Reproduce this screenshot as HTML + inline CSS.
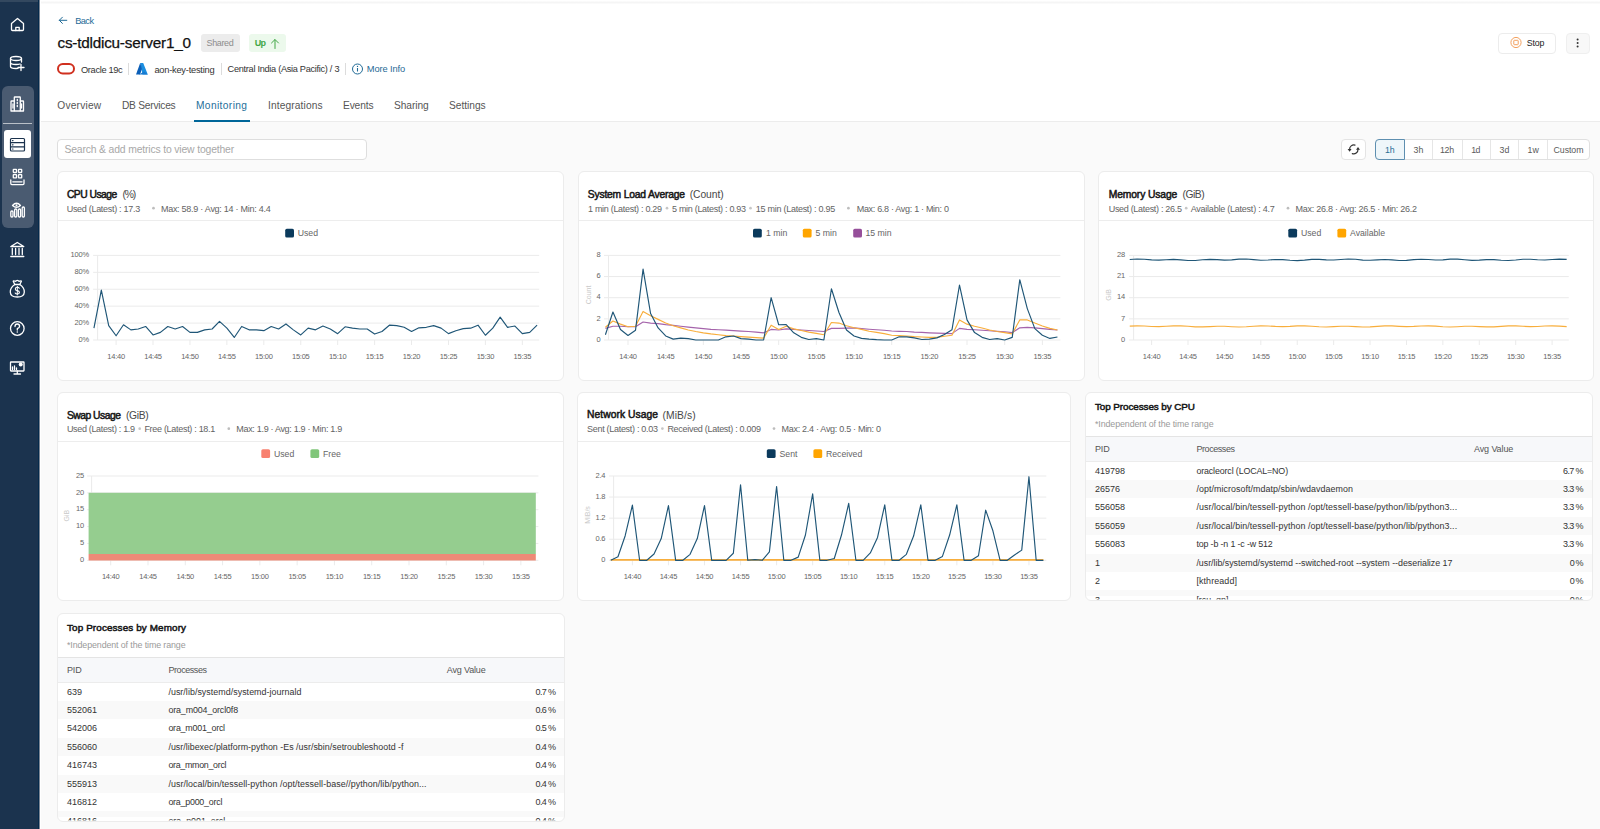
<!DOCTYPE html>
<html><head><meta charset="utf-8"><style>
*{box-sizing:border-box;margin:0;padding:0}
html,body{width:1600px;height:829px;overflow:hidden}
body{background:#fafafa;font-family:"Liberation Sans", sans-serif;position:relative}
.a{position:absolute}
.t{position:absolute;line-height:20px;white-space:nowrap}
</style></head><body>
<div class="a" style="left:0px;top:0px;width:39px;height:829px;background:#1b334e"></div><div class="a" style="left:0px;top:0px;width:39px;height:2px;background:#33485f"></div><div class="a" style="left:38px;top:0px;width:1px;height:829px;background:#042a4c"></div><div class="a" style="left:39px;top:0px;width:1px;height:829px;background:#7b8593"></div><div class="a" style="left:40px;top:0px;width:1px;height:829px;background:#fff"></div><div class="a" style="left:2px;top:86px;width:32px;height:142px;background:#4a5b71;border-radius:6px"></div><div class="a" style="left:3px;top:123px;width:29px;height:1px;background:#b9c0c8"></div><div class="a" style="left:4px;top:130px;width:27px;height:28px;background:#ffffff;border-radius:3px"></div><svg class="a" style="left:0;top:0" width="40" height="400"><path d="M11.5 23.5 L17.5 18.5 L23.5 23.5 L23.5 29.5 Q23.5 30.5 22.5 30.5 L12.5 30.5 Q11.5 30.5 11.5 29.5 Z" stroke="#fff" stroke-width="1.3" fill="none" stroke-linecap="round" stroke-linejoin="round"/><path d="M15.8 30.5 V27.3 H19.2 V30.5" stroke="#fff" stroke-width="1.3" fill="none" stroke-linecap="round" stroke-linejoin="round"/><ellipse cx="16" cy="58.5" rx="5.5" ry="2" stroke="#fff" stroke-width="1.3" fill="none" stroke-linecap="round" stroke-linejoin="round"/><path d="M10.5 58.5 V66.5 Q10.5 68.5 16 68.5 Q17 68.5 18 68.4 M21.5 58.5 V62 M10.5 62.5 Q10.5 64.5 16 64.5 Q18.5 64.5 20 64" stroke="#fff" stroke-width="1.3" fill="none" stroke-linecap="round" stroke-linejoin="round"/><path d="M21 64.5 V70.5 M18 67.5 H24" stroke="#fff" stroke-width="1.3" fill="none" stroke-linecap="round" stroke-linejoin="round"/><rect x="14.3" y="97" width="6" height="14" rx="0.5" stroke="#fff" stroke-width="1.3" fill="none" stroke-linecap="round" stroke-linejoin="round"/><path d="M14.3 101 H11.5 Q11 101 11 101.5 V111 H14.3 M20.3 101 H23 Q23.5 101 23.5 101.5 V111 H20.3" stroke="#fff" stroke-width="1.3" fill="none" stroke-linecap="round" stroke-linejoin="round"/><path d="M17.3 99.5 V100.5 M17.3 102.5 V103.5 M17.3 105.5 V106.5" stroke="#fff" stroke-width="1.3" fill="none" stroke-linecap="round" stroke-linejoin="round"/><path d="M13 104 V108 M21.5 104 V108" stroke="#fff" stroke-width="1.3" fill="none" stroke-linecap="round" stroke-linejoin="round"/><rect x="10.5" y="138.5" width="14" height="12.5" rx="1" stroke="#1b324d" stroke-width="1.2" fill="none" stroke-linecap="round" stroke-linejoin="round"/><path d="M10.5 142.7 H24.5 M10.5 146.9 H24.5" stroke="#1b324d" stroke-width="1.2" fill="none" stroke-linecap="round" stroke-linejoin="round"/><path d="M12.5 140.6 H13 M12.5 144.8 H13 M12.5 149 H13" stroke="#1b324d" stroke-width="1.2" fill="none" stroke-linecap="round" stroke-linejoin="round"/><rect x="13.3" y="169.3" width="3.2" height="3.2" rx="0.4" stroke="#fff" stroke-width="1.3" fill="none" stroke-linecap="round" stroke-linejoin="round"/><rect x="18.5" y="169.3" width="3.2" height="3.2" rx="0.4" stroke="#fff" stroke-width="1.3" fill="none" stroke-linecap="round" stroke-linejoin="round"/><rect x="13.3" y="174.6" width="3.2" height="3.2" rx="0.4" stroke="#fff" stroke-width="1.3" fill="none" stroke-linecap="round" stroke-linejoin="round"/><rect x="18.5" y="174.6" width="3.2" height="3.2" rx="0.4" stroke="#fff" stroke-width="1.3" fill="none" stroke-linecap="round" stroke-linejoin="round"/><path d="M10.8 180 V183.6 Q10.8 184.6 11.8 184.6 H23 Q24 184.6 24 183.6 V180 M12.8 181.8 H22" stroke="#fff" stroke-width="1.3" fill="none" stroke-linecap="round" stroke-linejoin="round"/><path d="M12.5 205.5 Q16.5 201 20.5 205.5 Q16.5 209 12.5 205.5 Z" stroke="#fff" stroke-width="1.3" fill="none" stroke-linecap="round" stroke-linejoin="round"/><circle cx="16.5" cy="205.3" r="1" fill="#fff"/><rect x="10.8" y="211" width="2.2" height="6" rx="1" stroke="#fff" stroke-width="1.3" fill="none" stroke-linecap="round" stroke-linejoin="round"/><rect x="14.6" y="209" width="2.2" height="8" rx="1" stroke="#fff" stroke-width="1.3" fill="none" stroke-linecap="round" stroke-linejoin="round"/><rect x="18.4" y="209" width="2.2" height="8" rx="1" stroke="#fff" stroke-width="1.3" fill="none" stroke-linecap="round" stroke-linejoin="round"/><rect x="22.2" y="207" width="2.2" height="10" rx="1" stroke="#fff" stroke-width="1.3" fill="none" stroke-linecap="round" stroke-linejoin="round"/><path d="M10.8 246.5 L17.3 242.5 L23.8 246.5 Z" stroke="#fff" stroke-width="1.3" fill="none" stroke-linecap="round" stroke-linejoin="round"/><path d="M12.3 248.5 V254.5 M15.6 248.5 V254.5 M19 248.5 V254.5 M22.3 248.5 V254.5 M10.8 256.5 H23.8" stroke="#fff" stroke-width="1.3" fill="none" stroke-linecap="round" stroke-linejoin="round"/><path d="M14.8 284.5 L13.2 281.3 Q13.5 280.5 14.5 281 Q15.5 281.6 16.3 280.8 Q17.3 280 18.3 280.8 Q19.1 281.6 20.1 281 Q21.1 280.5 21.4 281.3 L19.8 284.5 Q24.5 287.5 24.3 292.2 Q24 297 17.3 297 Q10.6 297 10.3 292.2 Q10.1 287.5 14.8 284.5 Z" stroke="#fff" stroke-width="1.3" fill="none" stroke-linecap="round" stroke-linejoin="round"/><path d="M14.8 284.5 H19.8" stroke="#fff" stroke-width="1.3" fill="none" stroke-linecap="round" stroke-linejoin="round"/><path d="M19.3 288.3 Q18.8 287.3 17.3 287.3 Q15.3 287.3 15.3 288.9 Q15.3 290.3 17.3 290.6 Q19.4 291 19.4 292.5 Q19.4 294 17.3 294 Q15.7 294 15.2 293" stroke="#fff" stroke-width="1.1" fill="none" stroke-linecap="round"/><path d="M17.3 286 V295.3" stroke="#fff" stroke-width="1" fill="none"/><circle cx="17.3" cy="328.5" r="6.8" stroke="#fff" stroke-width="1.3" fill="none" stroke-linecap="round" stroke-linejoin="round"/><path d="M15 326.5 Q15 324 17.3 324 Q19.6 324 19.6 326.3 Q19.6 327.8 17.3 328.7 V330" stroke="#fff" stroke-width="1.3" fill="none" stroke-linecap="round" stroke-linejoin="round"/><circle cx="17.3" cy="332" r="0.8" fill="#fff"/><rect x="10.5" y="362" width="13.5" height="9" rx="0.5" stroke="#fff" stroke-width="1.3" fill="none" stroke-linecap="round" stroke-linejoin="round"/><path d="M17.3 371 V374 M14 374 H20.5" stroke="#fff" stroke-width="1.3" fill="none" stroke-linecap="round" stroke-linejoin="round"/><path d="M12.5 369.5 V367 M14.5 369.5 V366 M16.5 369.5 V368" stroke="#fff" stroke-width="1.3" fill="none" stroke-linecap="round" stroke-linejoin="round"/><circle cx="20.7" cy="364.5" r="2" fill="#fff"/></svg><div class="a" style="left:40px;top:0px;width:1560px;height:121px;background:#fff"></div><div class="a" style="left:41px;top:1px;width:1559px;height:3px;background:linear-gradient(#fdfdfd,#f5f5f5,#fdfdfd)"></div><div class="a" style="left:41px;top:121px;width:1559px;height:1px;background:#ececec"></div><div class="a" style="left:201px;top:34px;width:39px;height:18px;background:#ececec;border-radius:3px"></div><div class="a" style="left:249px;top:34px;width:37px;height:18px;background:#ecf9ec;border-radius:3px"></div><div class="a" style="left:128px;top:63px;width:1px;height:12px;background:#dcdcdc"></div><div class="a" style="left:221px;top:63px;width:1px;height:12px;background:#dcdcdc"></div><div class="a" style="left:345px;top:63px;width:1px;height:12px;background:#dcdcdc"></div><div class="a" style="left:1498px;top:32.5px;width:58px;height:21.0px;background:#fff;border:1px solid #ececec;border-radius:4px"></div><div class="a" style="left:1565.5px;top:32.5px;width:24.0px;height:21.0px;background:#f8f8f8;border:1px solid #efefef;border-radius:4px"></div><div class="a" style="left:194px;top:119.5px;width:56px;height:2.0px;background:#006699"></div><div class="a" style="left:57px;top:139px;width:310px;height:21px;background:#fff;border:1px solid #dedede;border-radius:4px"></div><div class="a" style="left:1341px;top:139px;width:25px;height:21px;background:#fff;border:1px solid #e4e4e4;border-radius:4px"></div><div class="a" style="left:1375px;top:139px;width:215px;height:21px;background:#fff;border:1px solid #e0e0e0;border-radius:4px"></div><div class="a" style="left:1404px;top:140px;width:1px;height:19px;background:#e6e6e6"></div><div class="a" style="left:1432px;top:140px;width:1px;height:19px;background:#e6e6e6"></div><div class="a" style="left:1462px;top:140px;width:1px;height:19px;background:#e6e6e6"></div><div class="a" style="left:1490px;top:140px;width:1px;height:19px;background:#e6e6e6"></div><div class="a" style="left:1518px;top:140px;width:1px;height:19px;background:#e6e6e6"></div><div class="a" style="left:1547px;top:140px;width:1px;height:19px;background:#e6e6e6"></div><div class="a" style="left:1375px;top:139px;width:30px;height:21px;background:#eef6fa;border:1px solid #5e8fb0;border-radius:4px 0 0 4px"></div><div class="a" style="left:57px;top:171px;width:507px;height:210px;background:#fff;border:1px solid #ececec;border-radius:6px"></div><div class="a" style="left:58px;top:220px;width:505px;height:1px;background:#ededed"></div><div class="a" style="left:578px;top:171px;width:507px;height:210px;background:#fff;border:1px solid #ececec;border-radius:6px"></div><div class="a" style="left:579px;top:220px;width:505px;height:1px;background:#ededed"></div><div class="a" style="left:1098px;top:171px;width:496px;height:210px;background:#fff;border:1px solid #ececec;border-radius:6px"></div><div class="a" style="left:1099px;top:220px;width:494px;height:1px;background:#ededed"></div><div class="a" style="left:57px;top:392px;width:507px;height:209px;background:#fff;border:1px solid #ececec;border-radius:6px"></div><div class="a" style="left:58px;top:441px;width:505px;height:1px;background:#ededed"></div><div class="a" style="left:577px;top:392px;width:494px;height:209px;background:#fff;border:1px solid #ececec;border-radius:6px"></div><div class="a" style="left:578px;top:441px;width:492px;height:1px;background:#ededed"></div><div class="a" style="left:1085px;top:392px;width:508px;height:209px;background:#fff;border:1px solid #ececec;border-radius:6px"></div><div class="a" style="left:1086px;top:436px;width:506px;height:26.19999999999999px;background:#f7f8fa;border-top:1px solid #e4e4e4;border-bottom:1px solid #ececec"></div><div class="a" style="left:1086px;top:479.83px;width:506px;height:18.430000000000007px;background:#f9f9f9"></div><div class="a" style="left:1086px;top:516.6899999999999px;width:506px;height:18.42999999999995px;background:#f9f9f9"></div><div class="a" style="left:1086px;top:553.55px;width:506px;height:18.42999999999995px;background:#f9f9f9"></div><div class="a" style="left:1086px;top:590.41px;width:506px;height:5.590000000000032px;background:#f9f9f9"></div><div class="a" style="left:57px;top:613px;width:508px;height:209px;background:#fff;border:1px solid #ececec;border-radius:6px"></div><div class="a" style="left:58px;top:657px;width:506px;height:26.200000000000045px;background:#f7f8fa;border-top:1px solid #e4e4e4;border-bottom:1px solid #ececec"></div><div class="a" style="left:58px;top:700.8299999999999px;width:506px;height:18.42999999999995px;background:#f9f9f9"></div><div class="a" style="left:58px;top:737.6899999999999px;width:506px;height:18.42999999999995px;background:#f9f9f9"></div><div class="a" style="left:58px;top:774.55px;width:506px;height:18.42999999999995px;background:#f9f9f9"></div><div class="a" style="left:58px;top:811.41px;width:506px;height:5.590000000000032px;background:#f9f9f9"></div><svg class="a" style="left:0;top:0;font-family:'Liberation Sans', sans-serif" width="1600" height="829"><path d="M66.8 20.3 H59.3 M62.4 17.2 L59.3 20.3 L62.4 23.4" stroke="#1f6a96" stroke-width="1.0" fill="none" stroke-linecap="round" stroke-linejoin="round"/><text x="75.20" y="23.75" font-size="9.2" fill="#1f6a96" textLength="18.80" lengthAdjust="spacing">Back</text><text x="57.50" y="48.10" font-size="15.3" fill="#111" textLength="133.50" lengthAdjust="spacing" stroke="#111" stroke-width="0.25">cs-tdldicu-server1_0</text><text x="206.50" y="46.30" font-size="9.0" fill="#8c8c8c" textLength="27.30" lengthAdjust="spacing">Shared</text><text x="254.70" y="46.30" font-size="9.0" fill="#43a747" font-weight="700" textLength="11.20" lengthAdjust="spacing">Up</text><path d="M275 48.5 V39.8 M271.5 43 L275 39.5 L278.5 43" stroke="#43a747" stroke-width="1.0" fill="none" stroke-linecap="round" stroke-linejoin="round"/><rect x="58" y="64" width="16" height="9.5" rx="4.75" stroke="#d0301f" stroke-width="2" fill="none"/><text x="81.00" y="72.50" font-size="9.3" fill="#333" textLength="41.75" lengthAdjust="spacing">Oracle 19c</text><path d="M140.2 63 L143.2 63 L147.8 74.5 L142.5 74.5 Z" fill="#1b8ee0"/><path d="M140.2 63 L136 74.5 L140 74.5 L142 69 Z" fill="#0b5fb8"/><path d="M139 74.5 L144 71.5 L147.8 74.5 Z" fill="#1779d0"/><text x="154.40" y="72.50" font-size="9.3" fill="#333" textLength="60.20" lengthAdjust="spacing">aon-key-testing</text><text x="227.60" y="72.40" font-size="9.2" fill="#333" textLength="111.90" lengthAdjust="spacing">Central India (Asia Pacific) / 3</text><circle cx="357.5" cy="69" r="5" stroke="#1f6a96" stroke-width="1" fill="none"/><path d="M357.5 68 V71.5" stroke="#1f6a96" stroke-width="1.1"/><circle cx="357.5" cy="66.4" r="0.7" fill="#1f6a96"/><text x="366.80" y="72.40" font-size="9.3" fill="#1f6a96" textLength="38.40" lengthAdjust="spacing">More Info</text><circle cx="1516" cy="42.5" r="5.1" stroke="#f3a15f" stroke-width="1" fill="none"/><rect x="1513.8" y="40.3" width="4.4" height="4.4" rx="0.6" stroke="#f3a15f" stroke-width="1" fill="none"/><text x="1526.80" y="46.00" font-size="8.8" fill="#222" textLength="17.50" lengthAdjust="spacing">Stop</text><circle cx="1577.6" cy="39.5" r="1" fill="#333"/><circle cx="1577.6" cy="43" r="1" fill="#333"/><circle cx="1577.6" cy="46.5" r="1" fill="#333"/><text x="57.30" y="109.20" font-size="10.2" fill="#555" textLength="43.90" lengthAdjust="spacing">Overview</text><text x="122.00" y="109.20" font-size="10.2" fill="#555" textLength="53.70" lengthAdjust="spacing">DB Services</text><text x="196.00" y="109.20" font-size="10.2" fill="#1f6f9a" textLength="51.00" lengthAdjust="spacing">Monitoring</text><text x="268.00" y="109.20" font-size="10.2" fill="#555" textLength="54.60" lengthAdjust="spacing">Integrations</text><text x="343.00" y="109.20" font-size="10.2" fill="#555" textLength="30.50" lengthAdjust="spacing">Events</text><text x="394.00" y="109.20" font-size="10.2" fill="#555" textLength="34.70" lengthAdjust="spacing">Sharing</text><text x="449.00" y="109.20" font-size="10.2" fill="#555" textLength="36.70" lengthAdjust="spacing">Settings</text><text x="64.40" y="153.30" font-size="10.4" fill="#a8a8a8" textLength="169.80" lengthAdjust="spacing">Search &amp; add metrics to view together</text><path d="M1355 145.1 A4.3 4.3 0 0 0 1349.6 149.4 M1352.3 153.6 A4.3 4.3 0 0 0 1358 149.4" stroke="#333" stroke-width="1.2" fill="none" stroke-linecap="round"/><path d="M1347.6 149.1 L1351.6 149.1 L1349.6 151.8 Z M1356 149.7 L1360 149.7 L1358 147 Z" fill="#333"/><text x="1385.10" y="153.00" font-size="8.8" fill="#2b6d95" textLength="9.60" lengthAdjust="spacing">1h</text><text x="1413.60" y="153.00" font-size="8.8" fill="#5a5a5a" textLength="9.70" lengthAdjust="spacing">3h</text><text x="1440.00" y="153.00" font-size="8.8" fill="#5a5a5a" textLength="14.10" lengthAdjust="spacing">12h</text><text x="1471.30" y="153.00" font-size="8.8" fill="#5a5a5a" textLength="9.10" lengthAdjust="spacing">1d</text><text x="1499.60" y="153.00" font-size="8.8" fill="#5a5a5a" textLength="9.70" lengthAdjust="spacing">3d</text><text x="1553.60" y="153.00" font-size="8.8" fill="#5a5a5a" textLength="29.90" lengthAdjust="spacing">Custom</text><text x="1527.40" y="153.00" font-size="8.8" fill="#5a5a5a" textLength="11.50" lengthAdjust="spacing">1w</text><text x="66.90" y="197.90" font-size="10.3" fill="#161616" textLength="50.30" lengthAdjust="spacing" stroke="#161616" stroke-width="0.5">CPU Usage</text><text x="122.50" y="198.10" font-size="10.3" fill="#484848" textLength="13.80" lengthAdjust="spacing">(%)</text><text x="66.70" y="211.75" font-size="9.0" fill="#636363" textLength="73.50" lengthAdjust="spacing">Used (Latest) : 17.3</text><circle cx="153.5" cy="208.15" r="1.35" fill="#bdbdbd"/><text x="160.90" y="211.75" font-size="9.0" fill="#636363" textLength="109.90" lengthAdjust="spacing">Max: 58.9 · Avg: 14 · Min: 4.4</text><text x="587.80" y="197.90" font-size="10.3" fill="#161616" textLength="97.20" lengthAdjust="spacing" stroke="#161616" stroke-width="0.5">System Load Average</text><text x="689.70" y="198.10" font-size="10.3" fill="#484848" textLength="34.00" lengthAdjust="spacing">(Count)</text><text x="588.00" y="211.75" font-size="9.0" fill="#636363" textLength="74.00" lengthAdjust="spacing">1 min (Latest) : 0.29</text><circle cx="667" cy="208.15" r="1.35" fill="#c6c6c6"/><text x="672.00" y="211.75" font-size="9.0" fill="#636363" textLength="74.00" lengthAdjust="spacing">5 min (Latest) : 0.93</text><circle cx="750.5" cy="208.15" r="1.35" fill="#c6c6c6"/><text x="755.80" y="211.75" font-size="9.0" fill="#636363" textLength="79.50" lengthAdjust="spacing">15 min (Latest) : 0.95</text><circle cx="848.4" cy="208.15" r="1.35" fill="#bdbdbd"/><text x="856.70" y="211.75" font-size="9.0" fill="#636363" textLength="92.20" lengthAdjust="spacing">Max: 6.8 · Avg: 1 · Min: 0</text><text x="1108.70" y="197.90" font-size="10.3" fill="#161616" textLength="68.60" lengthAdjust="spacing" stroke="#161616" stroke-width="0.5">Memory Usage</text><text x="1182.50" y="198.10" font-size="10.3" fill="#484848" textLength="22.20" lengthAdjust="spacing">(GiB)</text><text x="1108.70" y="211.75" font-size="9.0" fill="#636363" textLength="73.30" lengthAdjust="spacing">Used (Latest) : 26.5</text><circle cx="1186.2" cy="208.15" r="1.35" fill="#c6c6c6"/><text x="1190.70" y="211.75" font-size="9.0" fill="#636363" textLength="84.10" lengthAdjust="spacing">Available (Latest) : 4.7</text><circle cx="1288" cy="208.15" r="1.35" fill="#bdbdbd"/><text x="1295.50" y="211.75" font-size="9.0" fill="#636363" textLength="121.60" lengthAdjust="spacing">Max: 26.8 · Avg: 26.5 · Min: 26.2</text><text x="66.90" y="418.50" font-size="10.3" fill="#161616" textLength="54.00" lengthAdjust="spacing" stroke="#161616" stroke-width="0.5">Swap Usage</text><text x="126.00" y="418.70" font-size="10.3" fill="#484848" textLength="22.70" lengthAdjust="spacing">(GiB)</text><text x="66.90" y="432.30" font-size="9.0" fill="#636363" textLength="68.10" lengthAdjust="spacing">Used (Latest) : 1.9</text><circle cx="139.7" cy="428.7" r="1.35" fill="#c6c6c6"/><text x="144.40" y="432.30" font-size="9.0" fill="#636363" textLength="70.90" lengthAdjust="spacing">Free (Latest) : 18.1</text><circle cx="228.8" cy="428.7" r="1.35" fill="#bdbdbd"/><text x="236.30" y="432.30" font-size="9.0" fill="#636363" textLength="105.90" lengthAdjust="spacing">Max: 1.9 · Avg: 1.9 · Min: 1.9</text><text x="587.00" y="418.40" font-size="10.3" fill="#161616" textLength="71.00" lengthAdjust="spacing" stroke="#161616" stroke-width="0.5">Network Usage</text><text x="662.60" y="418.60" font-size="10.3" fill="#484848" textLength="33.00" lengthAdjust="spacing">(MiB/s)</text><text x="587.00" y="432.20" font-size="9.0" fill="#636363" textLength="71.00" lengthAdjust="spacing">Sent (Latest) : 0.03</text><circle cx="662.4" cy="428.59999999999997" r="1.35" fill="#c6c6c6"/><text x="667.40" y="432.20" font-size="9.0" fill="#636363" textLength="93.60" lengthAdjust="spacing">Received (Latest) : 0.009</text><circle cx="774" cy="428.59999999999997" r="1.35" fill="#bdbdbd"/><text x="781.60" y="432.20" font-size="9.0" fill="#636363" textLength="99.40" lengthAdjust="spacing">Max: 2.4 · Avg: 0.5 · Min: 0</text><text x="1095.00" y="410.30" font-size="9.9" fill="#161616" textLength="100.00" lengthAdjust="spacing" stroke="#161616" stroke-width="0.5">Top Processes by CPU</text><text x="1095.00" y="426.80" font-size="8.9" fill="#9a9a9a" textLength="118.60" lengthAdjust="spacing">*Independent of the time range</text><text x="1095.00" y="451.80" font-size="9.0" fill="#555" textLength="14.70" lengthAdjust="spacing">PID</text><text x="1196.40" y="451.80" font-size="9.0" fill="#555" textLength="38.60" lengthAdjust="spacing">Processes</text><text x="1474.00" y="451.80" font-size="9.0" fill="#555" textLength="39.30" lengthAdjust="spacing">Avg Value</text><clipPath id="clip1085"><rect x="1085" y="392" width="507" height="207.5"/></clipPath><g clip-path="url(#clip1085)"><text x="1095.00" y="473.60" font-size="9.0" fill="#333">419798</text><text x="1196.40" y="473.60" font-size="8.9" fill="#333" textLength="91.70" lengthAdjust="spacing">oracleorcl (LOCAL=NO)</text><text x="1563.12" y="473.60" font-size="9.0" fill="#333" textLength="20.48" lengthAdjust="spacing">6.7 %</text><text x="1095.00" y="492.03" font-size="9.0" fill="#333">26576</text><text x="1196.40" y="492.03" font-size="8.9" fill="#333" textLength="156.50" lengthAdjust="spacing">/opt/microsoft/mdatp/sbin/wdavdaemon</text><text x="1563.12" y="492.03" font-size="9.0" fill="#333" textLength="20.48" lengthAdjust="spacing">3.3 %</text><text x="1095.00" y="510.46" font-size="9.0" fill="#333">556058</text><text x="1196.40" y="510.46" font-size="8.9" fill="#333" textLength="260.70" lengthAdjust="spacing">/usr/local/bin/tessell-python /opt/tessell-base/python/lib/python3...</text><text x="1563.12" y="510.46" font-size="9.0" fill="#333" textLength="20.48" lengthAdjust="spacing">3.3 %</text><text x="1095.00" y="528.89" font-size="9.0" fill="#333">556059</text><text x="1196.40" y="528.89" font-size="8.9" fill="#333" textLength="260.70" lengthAdjust="spacing">/usr/local/bin/tessell-python /opt/tessell-base/python/lib/python3...</text><text x="1563.12" y="528.89" font-size="9.0" fill="#333" textLength="20.48" lengthAdjust="spacing">3.3 %</text><text x="1095.00" y="547.32" font-size="9.0" fill="#333">556083</text><text x="1196.40" y="547.32" font-size="8.9" fill="#333" textLength="76.40" lengthAdjust="spacing">top -b -n 1 -c -w 512</text><text x="1563.12" y="547.32" font-size="9.0" fill="#333" textLength="20.48" lengthAdjust="spacing">3.3 %</text><text x="1095.00" y="565.75" font-size="9.0" fill="#333">1</text><text x="1196.40" y="565.75" font-size="8.9" fill="#333" textLength="256.00" lengthAdjust="spacing">/usr/lib/systemd/systemd --switched-root --system --deserialize 17</text><text x="1569.80" y="565.75" font-size="9.0" fill="#333" textLength="13.80" lengthAdjust="spacing">0 %</text><text x="1095.00" y="584.18" font-size="9.0" fill="#333">2</text><text x="1196.40" y="584.18" font-size="8.9" fill="#333" textLength="40.50" lengthAdjust="spacing">[kthreadd]</text><text x="1569.80" y="584.18" font-size="9.0" fill="#333" textLength="13.80" lengthAdjust="spacing">0 %</text><text x="1095.00" y="602.61" font-size="9.0" fill="#333">3</text><text x="1196.40" y="602.61" font-size="8.9" fill="#333">[rcu_gp]</text><text x="1569.80" y="602.61" font-size="9.0" fill="#333" textLength="13.80" lengthAdjust="spacing">0 %</text></g><text x="67.00" y="631.30" font-size="9.9" fill="#161616" textLength="119.00" lengthAdjust="spacing" stroke="#161616" stroke-width="0.5">Top Processes by Memory</text><text x="67.00" y="647.80" font-size="8.9" fill="#9a9a9a" textLength="118.60" lengthAdjust="spacing">*Independent of the time range</text><text x="67.00" y="672.80" font-size="9.0" fill="#555" textLength="14.70" lengthAdjust="spacing">PID</text><text x="168.40" y="672.80" font-size="9.0" fill="#555" textLength="38.60" lengthAdjust="spacing">Processes</text><text x="446.80" y="672.80" font-size="9.0" fill="#555" textLength="38.90" lengthAdjust="spacing">Avg Value</text><clipPath id="clip57"><rect x="57" y="613" width="507" height="207.5"/></clipPath><g clip-path="url(#clip57)"><text x="67.00" y="694.60" font-size="9.0" fill="#333">639</text><text x="168.40" y="694.60" font-size="8.9" fill="#333" textLength="133.00" lengthAdjust="spacing">/usr/lib/systemd/systemd-journald</text><text x="535.52" y="694.60" font-size="9.0" fill="#333" textLength="20.48" lengthAdjust="spacing">0.7 %</text><text x="67.00" y="713.03" font-size="9.0" fill="#333">552061</text><text x="168.40" y="713.03" font-size="8.9" fill="#333" textLength="69.70" lengthAdjust="spacing">ora_m004_orcl0f8</text><text x="535.52" y="713.03" font-size="9.0" fill="#333" textLength="20.48" lengthAdjust="spacing">0.6 %</text><text x="67.00" y="731.46" font-size="9.0" fill="#333">542006</text><text x="168.40" y="731.46" font-size="8.9" fill="#333" textLength="56.70" lengthAdjust="spacing">ora_m001_orcl</text><text x="535.52" y="731.46" font-size="9.0" fill="#333" textLength="20.48" lengthAdjust="spacing">0.5 %</text><text x="67.00" y="749.89" font-size="9.0" fill="#333">556060</text><text x="168.40" y="749.89" font-size="8.9" fill="#333" textLength="235.10" lengthAdjust="spacing">/usr/libexec/platform-python -Es /usr/sbin/setroubleshootd -f</text><text x="535.52" y="749.89" font-size="9.0" fill="#333" textLength="20.48" lengthAdjust="spacing">0.4 %</text><text x="67.00" y="768.32" font-size="9.0" fill="#333">416743</text><text x="168.40" y="768.32" font-size="8.9" fill="#333" textLength="58.10" lengthAdjust="spacing">ora_mmon_orcl</text><text x="535.52" y="768.32" font-size="9.0" fill="#333" textLength="20.48" lengthAdjust="spacing">0.4 %</text><text x="67.00" y="786.75" font-size="9.0" fill="#333">555913</text><text x="168.40" y="786.75" font-size="8.9" fill="#333" textLength="258.10" lengthAdjust="spacing">/usr/local/bin/tessell-python /opt/tessell-base//python/lib/python...</text><text x="535.52" y="786.75" font-size="9.0" fill="#333" textLength="20.48" lengthAdjust="spacing">0.4 %</text><text x="67.00" y="805.18" font-size="9.0" fill="#333">416812</text><text x="168.40" y="805.18" font-size="8.9" fill="#333" textLength="54.00" lengthAdjust="spacing">ora_p000_orcl</text><text x="535.52" y="805.18" font-size="9.0" fill="#333" textLength="20.48" lengthAdjust="spacing">0.4 %</text><text x="67.00" y="823.61" font-size="9.0" fill="#333">416816</text><text x="168.40" y="823.61" font-size="8.9" fill="#333">ora_p001_orcl</text><text x="535.52" y="823.61" font-size="9.0" fill="#333" textLength="20.48" lengthAdjust="spacing">0.4 %</text></g><line x1="93.1" y1="255.4" x2="539.2" y2="255.4" stroke="#ebebeb" stroke-width="1"/><text x="89" y="257.10" font-size="7.5" fill="#666" text-anchor="end" letter-spacing="-0.2">100%</text><line x1="93.1" y1="272.32" x2="539.2" y2="272.32" stroke="#ebebeb" stroke-width="1"/><text x="89" y="274.02" font-size="7.5" fill="#666" text-anchor="end" letter-spacing="-0.2">80%</text><line x1="93.1" y1="289.24" x2="539.2" y2="289.24" stroke="#ebebeb" stroke-width="1"/><text x="89" y="290.94" font-size="7.5" fill="#666" text-anchor="end" letter-spacing="-0.2">60%</text><line x1="93.1" y1="306.16" x2="539.2" y2="306.16" stroke="#ebebeb" stroke-width="1"/><text x="89" y="307.86" font-size="7.5" fill="#666" text-anchor="end" letter-spacing="-0.2">40%</text><line x1="93.1" y1="323.08000000000004" x2="539.2" y2="323.08000000000004" stroke="#ebebeb" stroke-width="1"/><text x="89" y="324.78" font-size="7.5" fill="#666" text-anchor="end" letter-spacing="-0.2">20%</text><line x1="93.1" y1="340.0" x2="539.2" y2="340.0" stroke="#ebebeb" stroke-width="1"/><text x="89" y="341.70" font-size="7.5" fill="#666" text-anchor="end" letter-spacing="-0.2">0%</text><line x1="97.6" y1="255.4" x2="97.6" y2="340.0" stroke="#ebebeb" stroke-width="1"/><line x1="116.10" y1="340.0" x2="116.10" y2="345.0" stroke="#ebebeb" stroke-width="1"/><text x="116.10" y="358.55" font-size="7.5" fill="#666" text-anchor="middle" letter-spacing="-0.25">14:40</text><line x1="153.03" y1="340.0" x2="153.03" y2="345.0" stroke="#ebebeb" stroke-width="1"/><text x="153.03" y="358.55" font-size="7.5" fill="#666" text-anchor="middle" letter-spacing="-0.25">14:45</text><line x1="189.96" y1="340.0" x2="189.96" y2="345.0" stroke="#ebebeb" stroke-width="1"/><text x="189.96" y="358.55" font-size="7.5" fill="#666" text-anchor="middle" letter-spacing="-0.25">14:50</text><line x1="226.89" y1="340.0" x2="226.89" y2="345.0" stroke="#ebebeb" stroke-width="1"/><text x="226.89" y="358.55" font-size="7.5" fill="#666" text-anchor="middle" letter-spacing="-0.25">14:55</text><line x1="263.82" y1="340.0" x2="263.82" y2="345.0" stroke="#ebebeb" stroke-width="1"/><text x="263.82" y="358.55" font-size="7.5" fill="#666" text-anchor="middle" letter-spacing="-0.25">15:00</text><line x1="300.75" y1="340.0" x2="300.75" y2="345.0" stroke="#ebebeb" stroke-width="1"/><text x="300.75" y="358.55" font-size="7.5" fill="#666" text-anchor="middle" letter-spacing="-0.25">15:05</text><line x1="337.68" y1="340.0" x2="337.68" y2="345.0" stroke="#ebebeb" stroke-width="1"/><text x="337.68" y="358.55" font-size="7.5" fill="#666" text-anchor="middle" letter-spacing="-0.25">15:10</text><line x1="374.61" y1="340.0" x2="374.61" y2="345.0" stroke="#ebebeb" stroke-width="1"/><text x="374.61" y="358.55" font-size="7.5" fill="#666" text-anchor="middle" letter-spacing="-0.25">15:15</text><line x1="411.54" y1="340.0" x2="411.54" y2="345.0" stroke="#ebebeb" stroke-width="1"/><text x="411.54" y="358.55" font-size="7.5" fill="#666" text-anchor="middle" letter-spacing="-0.25">15:20</text><line x1="448.47" y1="340.0" x2="448.47" y2="345.0" stroke="#ebebeb" stroke-width="1"/><text x="448.47" y="358.55" font-size="7.5" fill="#666" text-anchor="middle" letter-spacing="-0.25">15:25</text><line x1="485.40" y1="340.0" x2="485.40" y2="345.0" stroke="#ebebeb" stroke-width="1"/><text x="485.40" y="358.55" font-size="7.5" fill="#666" text-anchor="middle" letter-spacing="-0.25">15:30</text><line x1="522.33" y1="340.0" x2="522.33" y2="345.0" stroke="#ebebeb" stroke-width="1"/><text x="522.33" y="358.55" font-size="7.5" fill="#666" text-anchor="middle" letter-spacing="-0.25">15:35</text><polyline points="93.94,328.16 101.33,290.17 108.71,325.62 116.10,335.77 123.49,324.77 130.87,329.85 138.26,329.00 145.64,326.46 153.03,334.92 160.42,332.39 167.80,326.46 175.19,329.00 182.57,326.46 189.96,332.39 197.35,332.39 204.73,329.85 212.12,329.00 219.50,321.39 226.89,328.16 234.28,337.46 241.66,326.46 249.05,329.85 256.43,329.85 263.82,330.69 271.21,326.46 278.59,329.00 285.98,323.93 293.36,329.85 300.75,334.92 308.14,328.16 315.52,329.85 322.91,326.04 330.29,329.00 337.68,333.65 345.07,326.80 352.45,328.16 359.84,329.00 367.22,329.00 374.61,334.08 382.00,331.54 389.38,325.19 396.77,325.62 404.15,327.31 411.54,331.54 418.93,327.82 426.31,327.31 433.70,325.62 441.08,328.16 448.47,333.65 455.86,330.69 463.24,328.66 470.63,328.16 478.01,325.19 485.40,335.26 492.79,328.16 500.17,317.16 507.56,327.31 514.94,326.04 522.33,333.65 529.72,332.39 537.10,325.19" fill="none" stroke="#1f5677" stroke-width="1.15" stroke-linejoin="round"/><rect x="285.2" y="228.70" width="8.8" height="8.8" rx="1.6" fill="#0b3a5c"/><text x="297.7" y="236.20" font-size="8.7" fill="#666">Used</text><line x1="604.0" y1="255.4" x2="1060.4" y2="255.4" stroke="#ebebeb" stroke-width="1"/><text x="600.5" y="257.10" font-size="7.5" fill="#666" text-anchor="end" letter-spacing="-0.2">8</text><line x1="604.0" y1="276.55" x2="1060.4" y2="276.55" stroke="#ebebeb" stroke-width="1"/><text x="600.5" y="278.25" font-size="7.5" fill="#666" text-anchor="end" letter-spacing="-0.2">6</text><line x1="604.0" y1="297.7" x2="1060.4" y2="297.7" stroke="#ebebeb" stroke-width="1"/><text x="600.5" y="299.40" font-size="7.5" fill="#666" text-anchor="end" letter-spacing="-0.2">4</text><line x1="604.0" y1="318.85" x2="1060.4" y2="318.85" stroke="#ebebeb" stroke-width="1"/><text x="600.5" y="320.55" font-size="7.5" fill="#666" text-anchor="end" letter-spacing="-0.2">2</text><line x1="604.0" y1="340.0" x2="1060.4" y2="340.0" stroke="#ebebeb" stroke-width="1"/><text x="600.5" y="341.70" font-size="7.5" fill="#666" text-anchor="end" letter-spacing="-0.2">0</text><line x1="608.5" y1="255.4" x2="608.5" y2="340.0" stroke="#ebebeb" stroke-width="1"/><line x1="628.00" y1="340.0" x2="628.00" y2="345.0" stroke="#ebebeb" stroke-width="1"/><text x="628.00" y="358.55" font-size="7.5" fill="#666" text-anchor="middle" letter-spacing="-0.25">14:40</text><line x1="665.67" y1="340.0" x2="665.67" y2="345.0" stroke="#ebebeb" stroke-width="1"/><text x="665.67" y="358.55" font-size="7.5" fill="#666" text-anchor="middle" letter-spacing="-0.25">14:45</text><line x1="703.34" y1="340.0" x2="703.34" y2="345.0" stroke="#ebebeb" stroke-width="1"/><text x="703.34" y="358.55" font-size="7.5" fill="#666" text-anchor="middle" letter-spacing="-0.25">14:50</text><line x1="741.01" y1="340.0" x2="741.01" y2="345.0" stroke="#ebebeb" stroke-width="1"/><text x="741.01" y="358.55" font-size="7.5" fill="#666" text-anchor="middle" letter-spacing="-0.25">14:55</text><line x1="778.68" y1="340.0" x2="778.68" y2="345.0" stroke="#ebebeb" stroke-width="1"/><text x="778.68" y="358.55" font-size="7.5" fill="#666" text-anchor="middle" letter-spacing="-0.25">15:00</text><line x1="816.35" y1="340.0" x2="816.35" y2="345.0" stroke="#ebebeb" stroke-width="1"/><text x="816.35" y="358.55" font-size="7.5" fill="#666" text-anchor="middle" letter-spacing="-0.25">15:05</text><line x1="854.02" y1="340.0" x2="854.02" y2="345.0" stroke="#ebebeb" stroke-width="1"/><text x="854.02" y="358.55" font-size="7.5" fill="#666" text-anchor="middle" letter-spacing="-0.25">15:10</text><line x1="891.69" y1="340.0" x2="891.69" y2="345.0" stroke="#ebebeb" stroke-width="1"/><text x="891.69" y="358.55" font-size="7.5" fill="#666" text-anchor="middle" letter-spacing="-0.25">15:15</text><line x1="929.36" y1="340.0" x2="929.36" y2="345.0" stroke="#ebebeb" stroke-width="1"/><text x="929.36" y="358.55" font-size="7.5" fill="#666" text-anchor="middle" letter-spacing="-0.25">15:20</text><line x1="967.03" y1="340.0" x2="967.03" y2="345.0" stroke="#ebebeb" stroke-width="1"/><text x="967.03" y="358.55" font-size="7.5" fill="#666" text-anchor="middle" letter-spacing="-0.25">15:25</text><line x1="1004.70" y1="340.0" x2="1004.70" y2="345.0" stroke="#ebebeb" stroke-width="1"/><text x="1004.70" y="358.55" font-size="7.5" fill="#666" text-anchor="middle" letter-spacing="-0.25">15:30</text><line x1="1042.37" y1="340.0" x2="1042.37" y2="345.0" stroke="#ebebeb" stroke-width="1"/><text x="1042.37" y="358.55" font-size="7.5" fill="#666" text-anchor="middle" letter-spacing="-0.25">15:35</text><text x="588.2" y="294.9" font-size="7" fill="#c9c9c9" text-anchor="middle" transform="rotate(-90 588.2 294.9)" dy="2.5">Count</text><polyline points="605.40,328.37 612.93,326.25 620.47,326.25 628.00,326.78 635.53,326.78 643.07,322.02 650.60,323.08 658.14,323.61 665.67,324.67 673.20,325.41 680.74,326.25 688.27,327.10 695.81,327.84 703.34,328.58 710.87,329.43 718.41,329.74 725.94,330.17 733.48,330.69 741.01,331.12 748.54,331.54 756.08,332.07 763.61,332.81 771.15,329.43 778.68,329.95 786.21,328.90 793.75,329.43 801.28,329.95 808.82,330.48 816.35,331.01 823.88,331.54 831.42,328.37 838.95,328.37 846.49,328.16 854.02,327.84 861.55,328.58 869.09,329.21 876.62,329.74 884.16,330.27 891.69,331.01 899.22,331.33 906.76,331.54 914.29,332.07 921.83,332.39 929.36,332.81 936.89,333.13 944.43,333.34 951.96,333.65 959.50,328.37 967.03,329.43 974.56,329.74 982.10,330.27 989.63,330.80 997.17,331.33 1004.70,331.75 1012.23,332.60 1019.77,327.84 1027.30,327.31 1034.84,327.84 1042.37,328.58 1049.90,329.43 1057.44,329.95" fill="none" stroke="#a564ab" stroke-width="1.15" stroke-linejoin="round"/><polyline points="605.40,327.31 612.93,320.96 620.47,324.14 628.00,326.78 635.53,326.25 643.07,311.45 650.60,315.68 658.14,319.38 665.67,323.08 673.20,325.72 680.74,327.84 688.27,329.95 695.81,331.54 703.34,332.81 710.87,333.87 718.41,334.71 725.94,335.56 733.48,335.98 741.01,336.62 748.54,337.14 756.08,337.67 763.61,338.10 771.15,325.19 778.68,329.43 786.21,326.25 793.75,328.90 801.28,330.48 808.82,332.07 816.35,333.44 823.88,334.71 831.42,322.55 838.95,323.08 846.49,325.72 854.02,327.73 861.55,329.43 869.09,331.22 876.62,332.39 884.16,333.65 891.69,335.24 899.22,335.56 906.76,335.98 914.29,336.62 921.83,337.04 929.36,337.36 936.89,337.36 944.43,336.30 951.96,335.24 959.50,319.91 967.03,324.14 974.56,326.25 982.10,328.05 989.63,329.95 997.17,331.54 1004.70,332.60 1012.23,333.87 1019.77,319.91 1027.30,319.91 1034.84,323.08 1042.37,325.94 1049.90,328.37 1057.44,329.95" fill="none" stroke="#f8ae3c" stroke-width="1.15" stroke-linejoin="round"/><polyline points="605.40,334.71 612.93,311.98 620.47,329.43 628.00,335.45 635.53,330.17 643.07,269.15 650.60,313.56 658.14,327.94 665.67,335.98 673.20,339.15 680.74,338.10 688.27,338.63 695.81,340.00 703.34,340.00 710.87,340.00 718.41,340.00 725.94,336.83 733.48,335.98 741.01,338.63 748.54,339.15 756.08,340.00 763.61,340.00 771.15,297.70 778.68,324.77 786.21,324.56 793.75,332.81 801.28,337.36 808.82,339.47 816.35,338.63 823.88,340.00 831.42,288.71 838.95,312.50 846.49,329.95 854.02,335.98 861.55,338.41 869.09,339.15 876.62,339.68 884.16,340.00 891.69,340.00 899.22,336.83 906.76,336.83 914.29,337.88 921.83,339.47 929.36,339.15 936.89,337.88 944.43,334.40 951.96,329.85 959.50,285.01 967.03,319.91 974.56,332.60 982.10,337.36 989.63,339.47 997.17,338.63 1004.70,340.00 1012.23,337.36 1019.77,279.72 1027.30,308.59 1034.84,328.58 1042.37,335.24 1049.90,338.41 1057.44,337.04" fill="none" stroke="#1f5677" stroke-width="1.15" stroke-linejoin="round"/><rect x="753.0" y="228.70" width="8.8" height="8.8" rx="1.6" fill="#0b3a5c"/><text x="766" y="236.20" font-size="8.7" fill="#666">1 min</text><rect x="802.8" y="228.70" width="8.8" height="8.8" rx="1.6" fill="#ffa500"/><text x="815.5" y="236.20" font-size="8.7" fill="#666">5 min</text><rect x="853.1999999999999" y="228.70" width="8.8" height="8.8" rx="1.6" fill="#964f9a"/><text x="865.5" y="236.20" font-size="8.7" fill="#666">15 min</text><line x1="1129.1" y1="255.4" x2="1568.8" y2="255.4" stroke="#ebebeb" stroke-width="1"/><text x="1124.9" y="257.10" font-size="7.5" fill="#666" text-anchor="end" letter-spacing="-0.2">28</text><line x1="1129.1" y1="276.55" x2="1568.8" y2="276.55" stroke="#ebebeb" stroke-width="1"/><text x="1124.9" y="278.25" font-size="7.5" fill="#666" text-anchor="end" letter-spacing="-0.2">21</text><line x1="1129.1" y1="297.7" x2="1568.8" y2="297.7" stroke="#ebebeb" stroke-width="1"/><text x="1124.9" y="299.40" font-size="7.5" fill="#666" text-anchor="end" letter-spacing="-0.2">14</text><line x1="1129.1" y1="318.85" x2="1568.8" y2="318.85" stroke="#ebebeb" stroke-width="1"/><text x="1124.9" y="320.55" font-size="7.5" fill="#666" text-anchor="end" letter-spacing="-0.2">7</text><line x1="1129.1" y1="340.0" x2="1568.8" y2="340.0" stroke="#ebebeb" stroke-width="1"/><text x="1124.9" y="341.70" font-size="7.5" fill="#666" text-anchor="end" letter-spacing="-0.2">0</text><line x1="1133.6" y1="255.4" x2="1133.6" y2="340.0" stroke="#ebebeb" stroke-width="1"/><line x1="1151.60" y1="340.0" x2="1151.60" y2="345.0" stroke="#ebebeb" stroke-width="1"/><text x="1151.60" y="358.55" font-size="7.5" fill="#666" text-anchor="middle" letter-spacing="-0.25">14:40</text><line x1="1188.01" y1="340.0" x2="1188.01" y2="345.0" stroke="#ebebeb" stroke-width="1"/><text x="1188.01" y="358.55" font-size="7.5" fill="#666" text-anchor="middle" letter-spacing="-0.25">14:45</text><line x1="1224.42" y1="340.0" x2="1224.42" y2="345.0" stroke="#ebebeb" stroke-width="1"/><text x="1224.42" y="358.55" font-size="7.5" fill="#666" text-anchor="middle" letter-spacing="-0.25">14:50</text><line x1="1260.83" y1="340.0" x2="1260.83" y2="345.0" stroke="#ebebeb" stroke-width="1"/><text x="1260.83" y="358.55" font-size="7.5" fill="#666" text-anchor="middle" letter-spacing="-0.25">14:55</text><line x1="1297.24" y1="340.0" x2="1297.24" y2="345.0" stroke="#ebebeb" stroke-width="1"/><text x="1297.24" y="358.55" font-size="7.5" fill="#666" text-anchor="middle" letter-spacing="-0.25">15:00</text><line x1="1333.65" y1="340.0" x2="1333.65" y2="345.0" stroke="#ebebeb" stroke-width="1"/><text x="1333.65" y="358.55" font-size="7.5" fill="#666" text-anchor="middle" letter-spacing="-0.25">15:05</text><line x1="1370.06" y1="340.0" x2="1370.06" y2="345.0" stroke="#ebebeb" stroke-width="1"/><text x="1370.06" y="358.55" font-size="7.5" fill="#666" text-anchor="middle" letter-spacing="-0.25">15:10</text><line x1="1406.47" y1="340.0" x2="1406.47" y2="345.0" stroke="#ebebeb" stroke-width="1"/><text x="1406.47" y="358.55" font-size="7.5" fill="#666" text-anchor="middle" letter-spacing="-0.25">15:15</text><line x1="1442.88" y1="340.0" x2="1442.88" y2="345.0" stroke="#ebebeb" stroke-width="1"/><text x="1442.88" y="358.55" font-size="7.5" fill="#666" text-anchor="middle" letter-spacing="-0.25">15:20</text><line x1="1479.29" y1="340.0" x2="1479.29" y2="345.0" stroke="#ebebeb" stroke-width="1"/><text x="1479.29" y="358.55" font-size="7.5" fill="#666" text-anchor="middle" letter-spacing="-0.25">15:25</text><line x1="1515.70" y1="340.0" x2="1515.70" y2="345.0" stroke="#ebebeb" stroke-width="1"/><text x="1515.70" y="358.55" font-size="7.5" fill="#666" text-anchor="middle" letter-spacing="-0.25">15:30</text><line x1="1552.11" y1="340.0" x2="1552.11" y2="345.0" stroke="#ebebeb" stroke-width="1"/><text x="1552.11" y="358.55" font-size="7.5" fill="#666" text-anchor="middle" letter-spacing="-0.25">15:35</text><text x="1108.2" y="295" font-size="7" fill="#c9c9c9" text-anchor="middle" transform="rotate(-90 1108.2 295)" dy="2.5">GiB</text><polyline points="1129.75,259.53 1137.04,258.96 1144.32,259.21 1151.60,259.94 1158.88,260.16 1166.16,259.70 1173.45,259.40 1180.73,259.86 1188.01,260.53 1195.29,260.48 1202.57,259.77 1209.86,259.34 1217.14,259.69 1224.42,260.12 1231.70,259.85 1238.98,259.15 1246.27,258.99 1253.55,259.63 1260.83,260.22 1268.11,260.05 1275.39,259.53 1282.68,259.59 1289.96,260.26 1297.24,260.61 1304.52,260.11 1311.80,259.39 1319.09,259.37 1326.37,259.90 1333.65,260.05 1340.93,259.48 1348.21,258.97 1355.50,259.29 1362.78,260.06 1370.06,260.30 1377.34,259.83 1384.62,259.50 1391.91,259.91 1399.19,260.51 1406.47,260.40 1413.75,259.64 1421.03,259.20 1428.32,259.55 1435.60,260.02 1442.88,259.81 1450.16,259.17 1457.44,259.07 1464.73,259.75 1472.01,260.37 1479.29,260.18 1486.57,259.63 1493.85,259.63 1501.14,260.24 1508.42,260.53 1515.70,259.98 1522.98,259.25 1530.26,259.23 1537.55,259.80 1544.83,260.00 1552.11,259.50 1559.39,259.06 1566.67,259.42" fill="none" stroke="#1f5677" stroke-width="1.15" stroke-linejoin="round"/><polyline points="1129.75,326.19 1137.04,325.86 1144.32,326.05 1151.60,326.46 1158.88,326.61 1166.16,326.30 1173.45,325.88 1180.73,325.85 1188.01,326.30 1195.29,326.82 1202.57,326.93 1209.86,326.58 1217.14,326.23 1224.42,326.29 1231.70,326.71 1238.98,327.00 1246.27,326.80 1253.55,326.25 1260.83,325.86 1268.11,325.99 1275.39,326.41 1282.68,326.62 1289.96,326.36 1297.24,325.93 1304.52,325.83 1311.80,326.24 1319.09,326.78 1326.37,326.96 1333.65,326.65 1340.93,326.26 1348.21,326.25 1355.50,326.64 1362.78,326.98 1370.06,326.84 1377.34,326.31 1384.62,325.88 1391.91,325.93 1399.19,326.34 1406.47,326.61 1413.75,326.42 1421.03,325.99 1428.32,325.83 1435.60,326.18 1442.88,326.74 1450.16,326.98 1457.44,326.72 1464.73,326.30 1472.01,326.22 1479.29,326.57 1486.57,326.94 1493.85,326.88 1501.14,326.38 1508.42,325.90 1515.70,325.88 1522.98,326.28 1530.26,326.60 1537.55,326.48 1544.83,326.05 1552.11,325.83 1559.39,326.12 1566.67,326.68" fill="none" stroke="#f8ae3c" stroke-width="1.15" stroke-linejoin="round"/><rect x="1288.3" y="228.70" width="8.8" height="8.8" rx="1.6" fill="#0b3a5c"/><text x="1301" y="236.20" font-size="8.7" fill="#666">Used</text><rect x="1337.3999999999999" y="228.70" width="8.8" height="8.8" rx="1.6" fill="#ffa500"/><text x="1350" y="236.20" font-size="8.7" fill="#666">Available</text><line x1="87.1" y1="476.0" x2="538.4" y2="476.0" stroke="#ebebeb" stroke-width="1"/><text x="83.9" y="477.70" font-size="7.5" fill="#666" text-anchor="end" letter-spacing="-0.2">25</text><line x1="87.1" y1="492.86" x2="538.4" y2="492.86" stroke="#ebebeb" stroke-width="1"/><text x="83.9" y="494.56" font-size="7.5" fill="#666" text-anchor="end" letter-spacing="-0.2">20</text><line x1="87.1" y1="509.72" x2="538.4" y2="509.72" stroke="#ebebeb" stroke-width="1"/><text x="83.9" y="511.42" font-size="7.5" fill="#666" text-anchor="end" letter-spacing="-0.2">15</text><line x1="87.1" y1="526.58" x2="538.4" y2="526.58" stroke="#ebebeb" stroke-width="1"/><text x="83.9" y="528.28" font-size="7.5" fill="#666" text-anchor="end" letter-spacing="-0.2">10</text><line x1="87.1" y1="543.44" x2="538.4" y2="543.44" stroke="#ebebeb" stroke-width="1"/><text x="83.9" y="545.14" font-size="7.5" fill="#666" text-anchor="end" letter-spacing="-0.2">5</text><line x1="87.1" y1="560.3" x2="538.4" y2="560.3" stroke="#ebebeb" stroke-width="1"/><text x="83.9" y="562.00" font-size="7.5" fill="#666" text-anchor="end" letter-spacing="-0.2">0</text><line x1="91.6" y1="476.0" x2="91.6" y2="560.3" stroke="#ebebeb" stroke-width="1"/><line x1="110.70" y1="560.3" x2="110.70" y2="565.3" stroke="#ebebeb" stroke-width="1"/><text x="110.70" y="579.05" font-size="7.5" fill="#666" text-anchor="middle" letter-spacing="-0.25">14:40</text><line x1="147.99" y1="560.3" x2="147.99" y2="565.3" stroke="#ebebeb" stroke-width="1"/><text x="147.99" y="579.05" font-size="7.5" fill="#666" text-anchor="middle" letter-spacing="-0.25">14:45</text><line x1="185.28" y1="560.3" x2="185.28" y2="565.3" stroke="#ebebeb" stroke-width="1"/><text x="185.28" y="579.05" font-size="7.5" fill="#666" text-anchor="middle" letter-spacing="-0.25">14:50</text><line x1="222.57" y1="560.3" x2="222.57" y2="565.3" stroke="#ebebeb" stroke-width="1"/><text x="222.57" y="579.05" font-size="7.5" fill="#666" text-anchor="middle" letter-spacing="-0.25">14:55</text><line x1="259.86" y1="560.3" x2="259.86" y2="565.3" stroke="#ebebeb" stroke-width="1"/><text x="259.86" y="579.05" font-size="7.5" fill="#666" text-anchor="middle" letter-spacing="-0.25">15:00</text><line x1="297.15" y1="560.3" x2="297.15" y2="565.3" stroke="#ebebeb" stroke-width="1"/><text x="297.15" y="579.05" font-size="7.5" fill="#666" text-anchor="middle" letter-spacing="-0.25">15:05</text><line x1="334.44" y1="560.3" x2="334.44" y2="565.3" stroke="#ebebeb" stroke-width="1"/><text x="334.44" y="579.05" font-size="7.5" fill="#666" text-anchor="middle" letter-spacing="-0.25">15:10</text><line x1="371.73" y1="560.3" x2="371.73" y2="565.3" stroke="#ebebeb" stroke-width="1"/><text x="371.73" y="579.05" font-size="7.5" fill="#666" text-anchor="middle" letter-spacing="-0.25">15:15</text><line x1="409.02" y1="560.3" x2="409.02" y2="565.3" stroke="#ebebeb" stroke-width="1"/><text x="409.02" y="579.05" font-size="7.5" fill="#666" text-anchor="middle" letter-spacing="-0.25">15:20</text><line x1="446.31" y1="560.3" x2="446.31" y2="565.3" stroke="#ebebeb" stroke-width="1"/><text x="446.31" y="579.05" font-size="7.5" fill="#666" text-anchor="middle" letter-spacing="-0.25">15:25</text><line x1="483.60" y1="560.3" x2="483.60" y2="565.3" stroke="#ebebeb" stroke-width="1"/><text x="483.60" y="579.05" font-size="7.5" fill="#666" text-anchor="middle" letter-spacing="-0.25">15:30</text><line x1="520.89" y1="560.3" x2="520.89" y2="565.3" stroke="#ebebeb" stroke-width="1"/><text x="520.89" y="579.05" font-size="7.5" fill="#666" text-anchor="middle" letter-spacing="-0.25">15:35</text><text x="66.9" y="515.6" font-size="7" fill="#c9c9c9" text-anchor="middle" transform="rotate(-90 66.9 515.6)" dy="2.5">GiB</text><rect x="88.6" y="492.8" width="447.19999999999993" height="61.19999999999999" fill="#95cd8f"/><rect x="88.6" y="554.0" width="447.19999999999993" height="6.5" fill="#ee8a77"/><rect x="261.3" y="449.20" width="8.8" height="8.8" rx="1.6" fill="#f8806f"/><text x="274" y="456.70" font-size="8.7" fill="#666">Used</text><rect x="310.40000000000003" y="449.20" width="8.8" height="8.8" rx="1.6" fill="#80c67a"/><text x="323" y="456.70" font-size="8.7" fill="#666">Free</text><line x1="609.1" y1="476.0" x2="1046.3" y2="476.0" stroke="#ebebeb" stroke-width="1"/><text x="605.3" y="477.70" font-size="7.5" fill="#666" text-anchor="end" letter-spacing="-0.2">2.4</text><line x1="609.1" y1="497.075" x2="1046.3" y2="497.075" stroke="#ebebeb" stroke-width="1"/><text x="605.3" y="498.77" font-size="7.5" fill="#666" text-anchor="end" letter-spacing="-0.2">1.8</text><line x1="609.1" y1="518.15" x2="1046.3" y2="518.15" stroke="#ebebeb" stroke-width="1"/><text x="605.3" y="519.85" font-size="7.5" fill="#666" text-anchor="end" letter-spacing="-0.2">1.2</text><line x1="609.1" y1="539.225" x2="1046.3" y2="539.225" stroke="#ebebeb" stroke-width="1"/><text x="605.3" y="540.93" font-size="7.5" fill="#666" text-anchor="end" letter-spacing="-0.2">0.6</text><line x1="609.1" y1="560.3" x2="1046.3" y2="560.3" stroke="#ebebeb" stroke-width="1"/><text x="605.3" y="562.00" font-size="7.5" fill="#666" text-anchor="end" letter-spacing="-0.2">0</text><line x1="613.6" y1="476.0" x2="613.6" y2="560.3" stroke="#ebebeb" stroke-width="1"/><line x1="632.40" y1="560.3" x2="632.40" y2="565.3" stroke="#ebebeb" stroke-width="1"/><text x="632.40" y="579.05" font-size="7.5" fill="#666" text-anchor="middle" letter-spacing="-0.25">14:40</text><line x1="668.45" y1="560.3" x2="668.45" y2="565.3" stroke="#ebebeb" stroke-width="1"/><text x="668.45" y="579.05" font-size="7.5" fill="#666" text-anchor="middle" letter-spacing="-0.25">14:45</text><line x1="704.50" y1="560.3" x2="704.50" y2="565.3" stroke="#ebebeb" stroke-width="1"/><text x="704.50" y="579.05" font-size="7.5" fill="#666" text-anchor="middle" letter-spacing="-0.25">14:50</text><line x1="740.55" y1="560.3" x2="740.55" y2="565.3" stroke="#ebebeb" stroke-width="1"/><text x="740.55" y="579.05" font-size="7.5" fill="#666" text-anchor="middle" letter-spacing="-0.25">14:55</text><line x1="776.60" y1="560.3" x2="776.60" y2="565.3" stroke="#ebebeb" stroke-width="1"/><text x="776.60" y="579.05" font-size="7.5" fill="#666" text-anchor="middle" letter-spacing="-0.25">15:00</text><line x1="812.65" y1="560.3" x2="812.65" y2="565.3" stroke="#ebebeb" stroke-width="1"/><text x="812.65" y="579.05" font-size="7.5" fill="#666" text-anchor="middle" letter-spacing="-0.25">15:05</text><line x1="848.70" y1="560.3" x2="848.70" y2="565.3" stroke="#ebebeb" stroke-width="1"/><text x="848.70" y="579.05" font-size="7.5" fill="#666" text-anchor="middle" letter-spacing="-0.25">15:10</text><line x1="884.75" y1="560.3" x2="884.75" y2="565.3" stroke="#ebebeb" stroke-width="1"/><text x="884.75" y="579.05" font-size="7.5" fill="#666" text-anchor="middle" letter-spacing="-0.25">15:15</text><line x1="920.80" y1="560.3" x2="920.80" y2="565.3" stroke="#ebebeb" stroke-width="1"/><text x="920.80" y="579.05" font-size="7.5" fill="#666" text-anchor="middle" letter-spacing="-0.25">15:20</text><line x1="956.85" y1="560.3" x2="956.85" y2="565.3" stroke="#ebebeb" stroke-width="1"/><text x="956.85" y="579.05" font-size="7.5" fill="#666" text-anchor="middle" letter-spacing="-0.25">15:25</text><line x1="992.90" y1="560.3" x2="992.90" y2="565.3" stroke="#ebebeb" stroke-width="1"/><text x="992.90" y="579.05" font-size="7.5" fill="#666" text-anchor="middle" letter-spacing="-0.25">15:30</text><line x1="1028.95" y1="560.3" x2="1028.95" y2="565.3" stroke="#ebebeb" stroke-width="1"/><text x="1028.95" y="579.05" font-size="7.5" fill="#666" text-anchor="middle" letter-spacing="-0.25">15:35</text><text x="587.2" y="514.9" font-size="7" fill="#c9c9c9" text-anchor="middle" transform="rotate(-90 587.2 514.9)" dy="2.5">MiB/s</text><polyline points="610.77,559.95 617.98,559.95 625.19,559.95 632.40,559.95 639.61,559.95 646.82,559.95 654.03,559.95 661.24,559.95 668.45,559.95 675.66,559.95 682.87,559.95 690.08,559.95 697.29,559.95 704.50,559.95 711.71,559.95 718.92,559.95 726.13,559.95 733.34,559.95 740.55,559.95 747.76,559.95 754.97,559.95 762.18,559.95 769.39,559.95 776.60,559.95 783.81,559.95 791.02,559.95 798.23,559.95 805.44,559.95 812.65,559.95 819.86,559.95 827.07,559.95 834.28,559.95 841.49,559.95 848.70,559.95 855.91,559.95 863.12,559.95 870.33,559.95 877.54,559.95 884.75,559.95 891.96,559.95 899.17,559.95 906.38,559.95 913.59,559.95 920.80,559.95 928.01,559.95 935.22,559.95 942.43,559.95 949.64,559.95 956.85,559.95 964.06,559.95 971.27,559.95 978.48,559.95 985.69,559.95 992.90,559.95 1000.11,559.95 1007.32,559.95 1014.53,559.95 1021.74,559.95 1028.95,559.95 1036.16,559.95 1043.37,559.95" fill="none" stroke="#f8ae3c" stroke-width="1.8" stroke-linejoin="round"/><polyline points="610.77,560.30 617.98,556.79 625.19,535.71 632.40,505.15 639.61,560.30 646.82,560.30 654.03,553.98 661.24,538.52 668.45,505.50 675.66,560.30 682.87,560.30 690.08,554.33 697.29,538.52 704.50,505.50 711.71,560.30 718.92,560.30 726.13,560.30 733.34,553.27 740.55,484.78 747.76,560.30 754.97,559.60 762.18,560.30 769.39,551.87 776.60,486.54 783.81,560.30 791.02,560.30 798.23,557.14 805.44,535.01 812.65,493.91 819.86,560.30 827.07,560.30 834.28,558.54 841.49,535.01 848.70,503.40 855.91,560.30 863.12,560.30 870.33,552.92 877.54,537.47 884.75,504.80 891.96,560.30 899.17,560.30 906.38,554.33 913.59,536.06 920.80,504.80 928.01,560.30 935.22,560.30 942.43,556.44 949.64,535.01 956.85,504.80 964.06,560.30 971.27,560.30 978.48,555.73 985.69,510.07 992.90,530.79 1000.11,560.30 1007.32,560.30 1014.53,555.03 1021.74,550.11 1028.95,476.70 1036.16,560.30 1043.37,560.30" fill="none" stroke="#1f5677" stroke-width="1.15" stroke-linejoin="round"/><rect x="766.8" y="449.20" width="8.8" height="8.8" rx="1.6" fill="#0b3a5c"/><text x="779.5" y="456.70" font-size="8.7" fill="#666">Sent</text><rect x="813.4" y="449.20" width="8.8" height="8.8" rx="1.6" fill="#ffa500"/><text x="826" y="456.70" font-size="8.7" fill="#666">Received</text></svg>
</body></html>
